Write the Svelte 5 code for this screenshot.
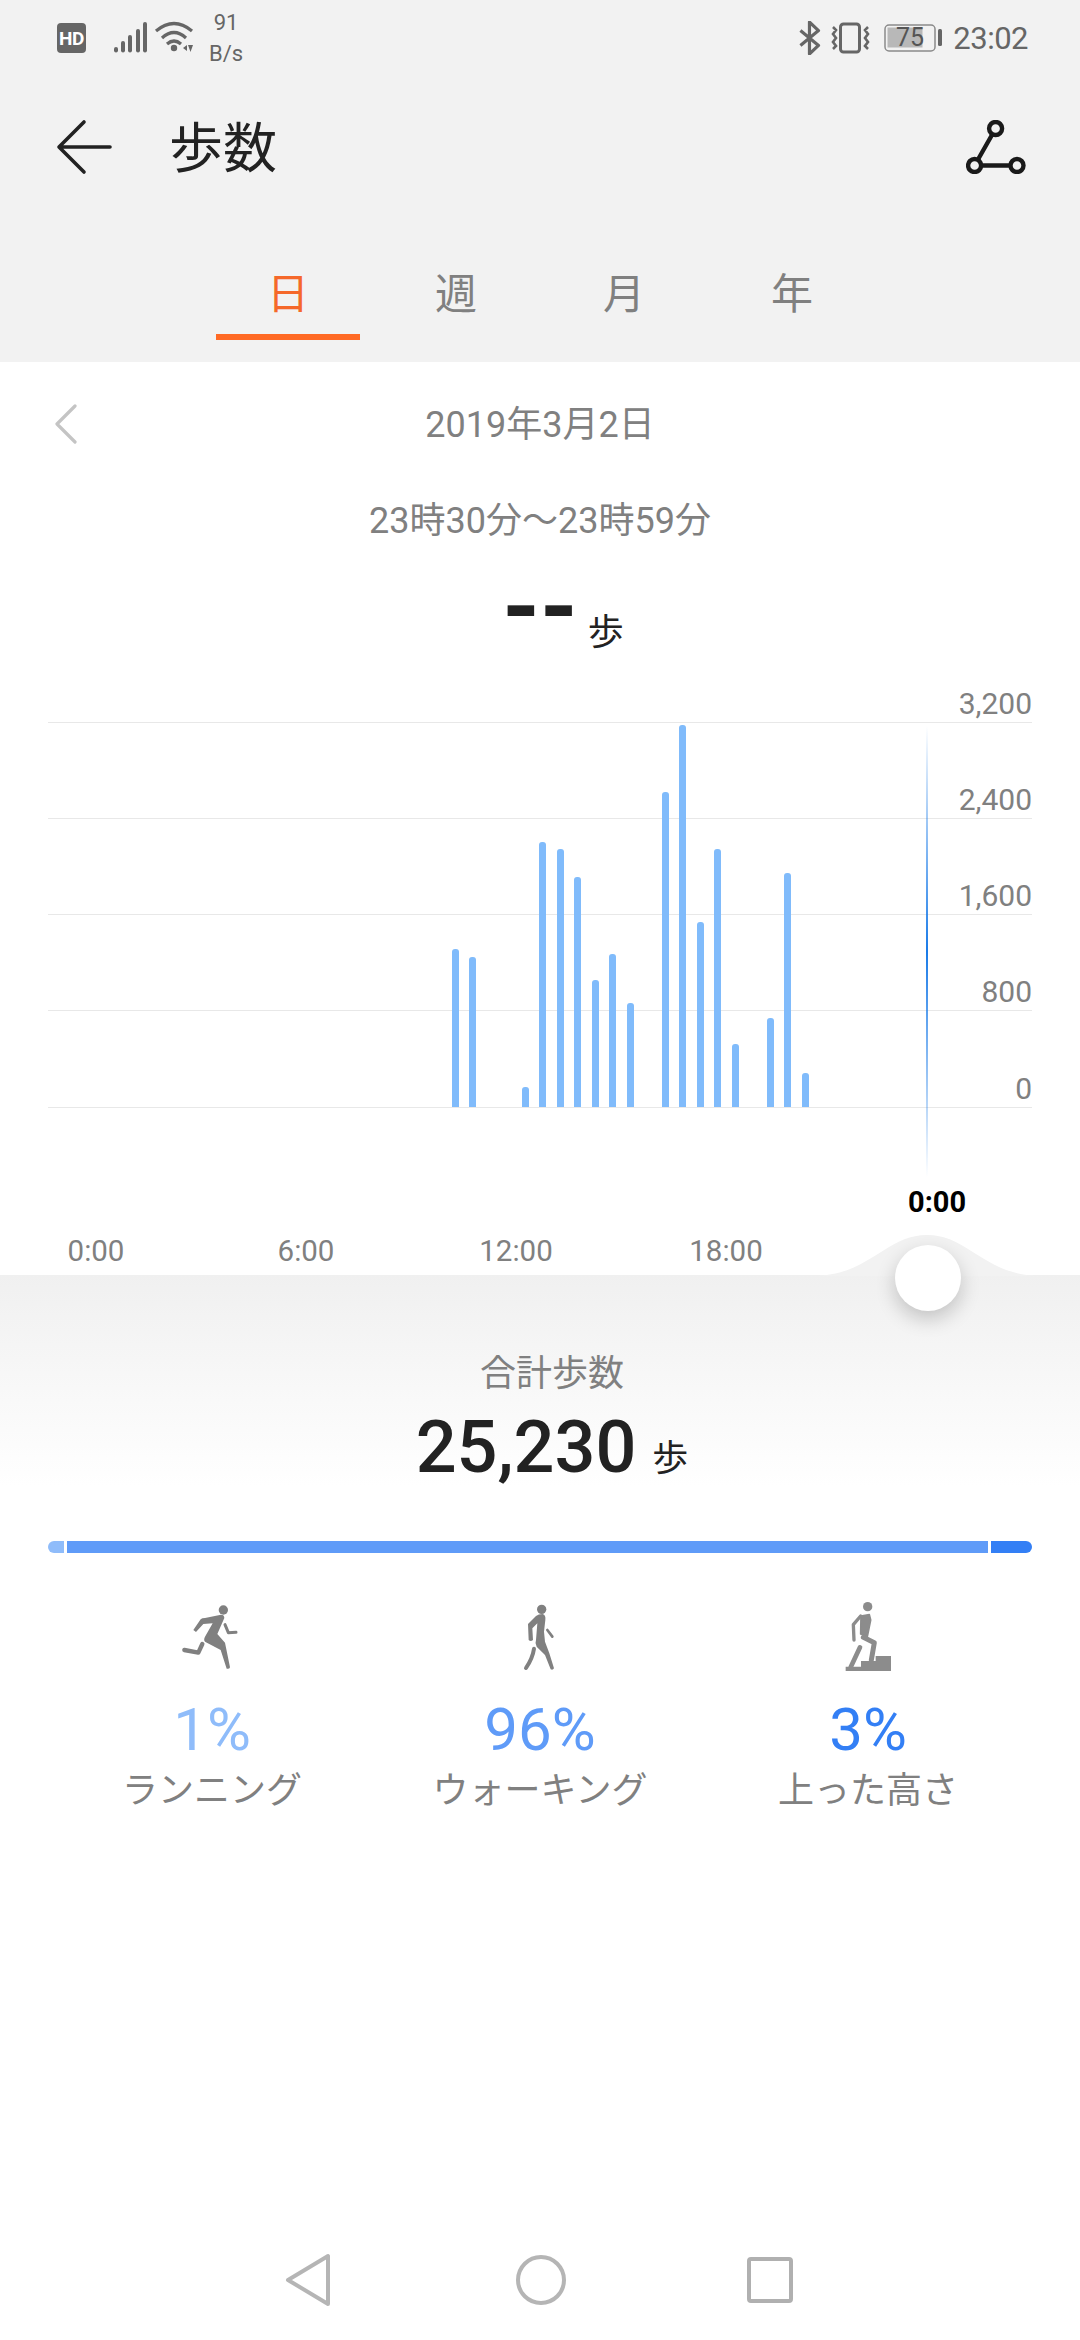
<script>
  const tabs = ['日', '週', '月', '年'];
  const grid = ['3,200', '2,400', '1,600', '800', '0'];
  const hours = ['0:00', '6:00', '12:00', '18:00'];
  const bars = [158, 150, 0, 0, 20, 265, 258, 230, 127, 153, 104, 0, 315, 382, 185, 258, 63, 0, 89, 234, 34];
  const signal = [[0, 25, 5], [7, 19, 11], [14, 13, 17], [22, 7, 23], [29, 0, 30]];
  const stats = [
    { pct: '1%', label: 'ランニング', cls: 'light' },
    { pct: '96%', label: 'ウォーキング', cls: 'mid' },
    { pct: '3%', label: '上った高さ', cls: 'deep' }
  ];
</script>

<div class="page">
  <div class="top">
    <div class="status">
      <div class="status-left">
        <span class="hd">HD</span>
        <svg class="signal" width="33" height="32" viewBox="0 0 33 32">
          {#each signal as [x, y1]}
            <line x1={x + 2} y1={y1 + 2} x2={x + 2} y2="28.500" stroke="#666" stroke-width="4" stroke-linecap="round" />
          {/each}
        </svg>
        <svg class="wifi" width="40" height="34" viewBox="0 0 40 34" fill="none" stroke="#666" stroke-width="3.200">
          <path d="M2 10Q20-5 38 10" />
          <path d="M8 17Q20 6 32 17" />
          <path d="M13 23Q20 17 27 23" />
          <circle cx="20" cy="27" r="3.200" fill="#666" stroke="none" />
          <path d="M29 27l4-3v6zM34 24h5l-2.500 7z" fill="#666" stroke="none" />
        </svg>
        <div class="speed"><span>91</span><span>B/s</span></div>
      </div>
      <div class="status-right">
        <svg class="bt" width="22" height="34" viewBox="0 0 20 32" fill="none" stroke="#666" stroke-width="3" stroke-linejoin="round">
          <path d="M1 9L18 23L9.500 31V1L18 9L1 23" />
        </svg>
        <svg class="vibrate" width="39" height="32" viewBox="0 0 39 32" fill="none" stroke="#666">
          <rect x="9.500" y="2" width="19" height="28" rx="3" stroke-width="3" />
          <path d="M2 5l3 3-3 4 3 4-3 4 3 4-3 3M37 5l-3 3 3 4-3 4 3 4-3 4 3 3" stroke-width="2.600" />
        </svg>
        <svg class="battery" width="59" height="28" viewBox="0 0 59 28">
          <rect x="1" y="1" width="50" height="26" rx="4" fill="none" stroke="#8a8a8a" stroke-width="1.500" />
          <rect x="3.500" y="3.500" width="35" height="20" fill="#b8b8b8" />
          <rect x="54" y="5" width="4" height="17" rx="1.500" fill="#666" />
          <text x="26" y="22" text-anchor="middle" class="battery-text">75</text>
        </svg>
        <span class="time">23:02</span>
      </div>
    </div>

    <header class="titlebar">
      <svg class="back" width="56" height="56" viewBox="0 0 56 56" fill="none" stroke="#222" stroke-width="3.600" stroke-linecap="round" stroke-linejoin="round">
        <path d="M54 28H4M28 3L3 28l25 25" />
      </svg>
      <h1>歩数</h1>
      <svg class="share" width="60" height="54" viewBox="0 0 60 54" fill="none" stroke="#1a1a1a" stroke-width="4.400">
        <circle cx="29.600" cy="8.500" r="6.500" />
        <circle cx="8.600" cy="45.500" r="6.500" />
        <circle cx="51" cy="45.500" r="6.500" />
        <path d="M26.500 14L12 39.500M15 45.500H44.500" />
      </svg>
    </header>

    <nav class="tabs">
      {#each tabs as tab, i}
        <div class="tab" class:active={i === 0}>{tab}</div>
      {/each}
    </nav>
  </div>

  <section class="chart-section">
    <div class="date-row">
      <svg class="chev" width="24" height="40" viewBox="0 0 24 40" fill="none" stroke="#c4c4c4" stroke-width="3.200" stroke-linecap="round" stroke-linejoin="round">
        <path d="M21 2L3 20l18 18" />
      </svg>
      <span>2019年3月2日</span>
    </div>
    <div class="range">23時30分〜23時59分</div>
    <div class="value"><b>--</b><span>歩</span></div>

    <div class="chart">
      {#each grid as g, i}
        <div class="grid-row" class:first={i === 0} class:last={i === grid.length - 1}><span>{g}</span></div>
      {/each}
      <div class="bars">
        {#each bars as h}
          <div class="slot">
            {#if h}<div class="bar" style="height:{h}px"></div>{/if}
          </div>
        {/each}
      </div>
      <div class="cursor"></div>
      <div class="cursor-label">0:00</div>
    </div>

    <div class="axis">
      {#each hours as h}<span>{h}</span>{/each}
    </div>
  </section>

  <section class="panel">
    <svg class="hump" width="230" height="41" viewBox="0 0 230 41">
      <path d="M0 41C58 41 73 0 115 0s57 41 115 41z" fill="#f2f2f2" />
    </svg>
    <div class="knob"></div>
    <div class="total-label">合計歩数</div>
    <div class="total"><b>25,230</b><span>歩</span></div>
  </section>

  <div class="progress">
    <div class="seg s1"></div>
    <div class="seg s2"></div>
    <div class="seg s3"></div>
  </div>

  <div class="stats">
    {#each stats as s, i}
      <div class="stat">
        <div class="icon">
          {#if i === 0}
            <svg class="run" width="120" height="90" viewBox="0 0 360 270" fill="none" stroke="#808080" stroke-linecap="round" stroke-linejoin="round">
              <circle cx="190" cy="60" r="14" fill="#808080" stroke="none" />
              <path d="M100 120L122 88Q126 84 135 84L183 74Q193 74 193 84L172 132L195 158L210 232Q208 238 200 236L182 180L135 155Q130 150 135 140L158 100L130 102L108 126Z" fill="#808080" stroke="none" />
              <path d="M195 104L205 128L228 127" stroke-width="9" />
              <path d="M127 162L115 188L73 180" stroke-width="13" />
            </svg>
          {:else if i === 1}
            <svg class="walk" width="90" height="90" viewBox="0 0 270 270" fill="none" stroke="#808080" stroke-linecap="round" stroke-linejoin="round">
              <circle cx="125" cy="58" r="14" fill="#808080" stroke="none" />
              <path d="M84 102L108 78Q115 72 128 72Q138 75 136 90L132 125L135 155L148 190L162 235Q158 242 152 238L135 195L110 170Q104 160 108 150L112 100L97 115L99 150Q92 156 86 150Z" fill="#808080" stroke="none" />
              <path d="M142 120L157 140" stroke-width="8" />
              <path d="M102 176Q98 204 78 234" stroke-width="12" />
            </svg>
          {:else}
            <svg class="climb" width="90" height="90" viewBox="0 0 270 270" fill="none" stroke="#8c8c8c" stroke-linecap="round" stroke-linejoin="round">
              <circle cx="113" cy="50" r="14" fill="#8c8c8c" stroke="none" />
              <path d="M93 78L118 74L122 90L112 140L92 132Z" fill="#8c8c8c" stroke="#8c8c8c" stroke-width="5" />
              <path d="M92 78L70 104L72 150" stroke-width="10" />
              <path d="M100 142L133 158L124 210" stroke-width="15" />
              <path d="M90 172L62 232" stroke-width="14" />
              <path d="M47 230H93V213H137V198H183V243H47Z" fill="#8c8c8c" stroke="none" />
            </svg>
          {/if}
        </div>
        <div class="pct {s.cls}">{s.pct}</div>
        <div class="stat-label">{s.label}</div>
      </div>
    {/each}
  </div>

  <footer class="navbar">
    <svg width="46" height="54" viewBox="0 0 46 54" fill="none" stroke="#b5b5b5" stroke-width="4" stroke-linejoin="round">
      <path d="M43 3V51L3 27Z" />
    </svg>
    <svg width="50" height="50" viewBox="0 0 50 50" fill="none" stroke="#b5b5b5" stroke-width="4">
      <circle cx="25" cy="25" r="23" />
    </svg>
    <svg width="46" height="46" viewBox="0 0 46 46" fill="none" stroke="#b0b0b0" stroke-width="4">
      <rect x="2" y="2" width="42" height="42" rx="2" />
    </svg>
  </footer>
</div>

<style>
  :global(body) {
    margin: 0;
    background: #fff;
  }
  .page {
    width: 1080px;
    height: 2340px;
    display: flex;
    flex-direction: column;
    overflow: hidden;
    background: #fff;
    font-family: Roboto, "Noto Sans CJK JP", sans-serif;
    color: #808080;
  }
  .top {
    background: #f2f2f2;
    height: 362px;
    flex: none;
  }
  .status {
    height: 76px;
    display: flex;
    justify-content: space-between;
    align-items: center;
    color: #666;
  }
  .status-left {
    display: flex;
    align-items: center;
    padding-left: 57px;
  }
  .hd {
    width: 29px;
    height: 30px;
    background: #666;
    color: #fff;
    border-radius: 4px;
    font-size: 19px;
    font-weight: 700;
    letter-spacing: -0.5px;
    display: flex;
    align-items: center;
    justify-content: center;
  }
  .signal {
    margin-left: 28px;
  }
  .wifi {
    margin-left: 7px;
  }
  .speed {
    width: 40px;
    margin-left: 12px;
    display: flex;
    flex-direction: column;
    align-items: center;
    font-size: 22px;
    line-height: 31px;
  }
  .status-right {
    display: flex;
    align-items: center;
    padding-right: 52px;
  }
  .vibrate {
    margin-left: 10px;
  }
  .battery {
    margin-left: 14px;
  }
  .battery-text {
    font-size: 25px;
    fill: #555;
    font-family: Roboto, sans-serif;
  }
  .time {
    margin-left: 10px;
    font-size: 31px;
    letter-spacing: -0.5px;
    line-height: 1;
  }
  .titlebar {
    height: 142px;
    display: flex;
    align-items: center;
    padding: 0 0 0 56px;
    position: relative;
  }
  .back {
    flex: none;
  }
  h1 {
    margin: 6px 0 0 57px;
    font-size: 54px;
    font-weight: 400;
    color: #222;
    line-height: 1;
  }
  .share {
    margin-left: auto;
    margin-right: 54px;
  }
  .tabs {
    height: 122px;
    display: flex;
    padding-left: 204px;
  }
  .tab {
    width: 144px;
    margin: 0 12px;
    height: 122px;
    box-sizing: border-box;
    padding-top: 48px;
    text-align: center;
    font-size: 42px;
    line-height: 58px;
    color: #808080;
  }
  .tab.active {
    color: #f5682a;
    border-bottom: 6px solid #ff6a25;
  }
  .chart-section {
    height: 913px;
    flex: none;
    position: relative;
  }
  .date-row {
    height: 124px;
    box-sizing: border-box;
    padding-bottom: 6px;
    display: flex;
    align-items: center;
    justify-content: center;
    font-size: 36px;
    position: relative;
  }
  .chev {
    position: absolute;
    left: 54px;
    top: 42px;
  }
  .range {
    height: 70px;
    line-height: 70px;
    text-align: center;
    font-size: 36px;
  }
  .value {
    height: 135px;
    display: flex;
    justify-content: center;
    padding-left: 46px;
    color: #222;
  }
  .value b {
    font-size: 96px;
    font-weight: 700;
    line-height: 102px;
  }
  .value span {
    font-size: 36px;
    margin-left: 10px;
    margin-top: 52px;
    line-height: 50px;
  }
  .chart {
    position: relative;
    margin: 0 48px;
  }
  .grid-row {
    height: 96px;
    box-sizing: border-box;
    border-bottom: 1.500px solid #e8e8e8;
    display: flex;
    justify-content: flex-end;
    align-items: flex-end;
    font-size: 30px;
    line-height: 32px;
    padding-bottom: 2px;
  }
  .grid-row.first {
    height: 32px;
  }
  .grid-row.last {
    height: 97px;
  }
  .bars {
    position: absolute;
    left: 403.500px;
    bottom: 1px;
    display: flex;
    align-items: flex-end;
  }
  .slot {
    width: 17.500px;
    display: flex;
    align-items: flex-end;
  }
  .bar {
    width: 7px;
    background: #80bbfb;
    border-radius: 3px 3px 0 0;
  }
  .cursor {
    position: absolute;
    left: 878px;
    top: 35px;
    height: 451px;
    width: 2px;
    background: linear-gradient(to bottom, rgba(26, 123, 232, 0), #1a7be8 50%, rgba(26, 123, 232, 0));
  }
  .cursor-label {
    position: absolute;
    left: 860px;
    top: 491px;
    font-size: 29px;
    line-height: 40px;
    font-weight: 700;
    color: #000;
  }
  .axis {
    position: absolute;
    left: -9px;
    top: 869px;
    display: grid;
    grid-template-columns: repeat(4, 210px);
    justify-items: center;
    font-size: 29.500px;
    line-height: 40px;
  }
  .panel {
    height: 220px;
    flex: none;
    position: relative;
    background: linear-gradient(to bottom, #f0f0f0, #fff 96%);
    box-sizing: border-box;
    padding-top: 74px;
  }
  .hump {
    position: absolute;
    left: 812px;
    top: -40px;
  }
  .knob {
    position: absolute;
    left: 895px;
    top: -30px;
    width: 66px;
    height: 66px;
    border-radius: 50%;
    background: #fff;
    box-shadow: 0 8px 20px rgba(0, 0, 0, 0.2);
  }
  .total-label {
    text-align: center;
    padding-left: 24px;
    font-size: 36px;
    line-height: 50px;
  }
  .total {
    display: flex;
    justify-content: center;
    padding-left: 24px;
    color: #222;
    height: 84px;
    margin-top: 7px;
  }
  .total b {
    font-size: 72px;
    font-weight: 500;
    line-height: 84px;
  }
  .total span {
    font-size: 36px;
    margin-left: 16px;
    margin-top: 28px;
    line-height: 50px;
  }
  .progress {
    margin: 46px 48px 0;
    height: 12px;
    flex: none;
    display: flex;
    gap: 3px;
  }
  .seg {
    height: 12px;
  }
  .s1 {
    width: 16px;
    background: #8fbcfa;
    border-radius: 6px 0 0 6px;
  }
  .s2 {
    flex: 1;
    background: #5f9bf8;
  }
  .s3 {
    width: 41px;
    background: #337ff5;
    border-radius: 0 6px 6px 0;
  }
  .stats {
    margin: 37px 48px 0;
    display: grid;
    grid-template-columns: repeat(3, 1fr);
    flex: none;
  }
  .stat {
    display: flex;
    flex-direction: column;
    align-items: center;
  }
  .icon {
    height: 90px;
    display: flex;
    justify-content: center;
  }
  .run {
    margin-left: 16px;
  }
  .walk {
    margin-left: 10px;
  }
  .climb {
    margin-left: 14px;
  }
  .pct {
    font-size: 60px;
    line-height: 70px;
    margin-top: 15px;
  }
  .light {
    color: #8fbcfa;
  }
  .mid {
    color: #5f9bf8;
  }
  .deep {
    color: #337ff5;
  }
  .stat-label {
    font-size: 36px;
    line-height: 50px;
    margin-top: 1px;
  }
  .navbar {
    margin-top: auto;
    height: 120px;
    flex: none;
    display: flex;
    align-items: center;
    padding-left: 285px;
    gap: 185px;
  }
  .navbar svg:nth-child(3) {
    margin-left: -4px;
  }
</style>
